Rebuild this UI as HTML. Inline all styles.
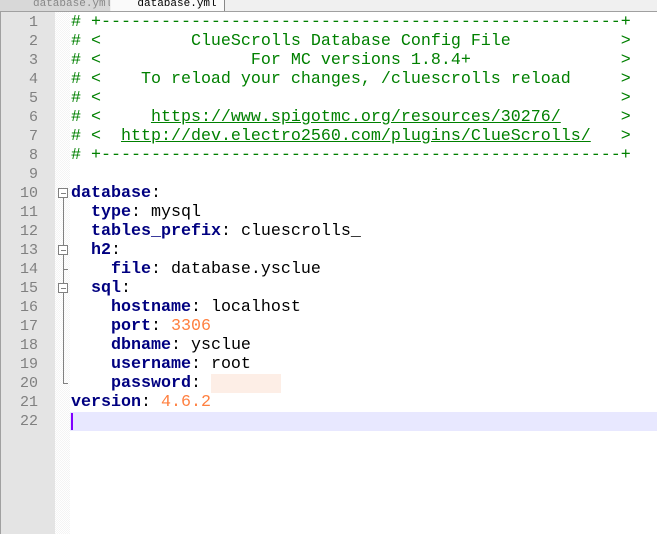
<!DOCTYPE html><html><head><style>
body{margin:0;width:657px;height:534px;overflow:hidden;background:#fff;position:relative;font-family:"Liberation Mono",monospace}
.tabs{position:absolute;left:0;top:0;width:657px;height:11px;background:#f0f0f0;border-bottom:1px solid #a0a0a0}
.t1{position:absolute;left:0;top:0;width:110px;height:11px;background:#d8d8d8;font-size:11px;line-height:8px;color:#888;overflow:hidden}
.t2{position:absolute;left:111px;top:0;width:113px;height:11px;background:#fafafa;border-right:1px solid #888;font-size:11px;line-height:8px;color:#000;overflow:hidden}
.gut{position:absolute;left:0;top:12px;width:55px;height:522px;background:#e4e4e4;border-left:1px solid #a0a0a0}
.fold{position:absolute;left:55px;top:12px;width:15px;height:522px;background:repeating-conic-gradient(#f4f4f4 0 25%,#fff 0 50%) 0 0/2px 2px}
.cur{position:absolute;left:70px;top:412px;width:587px;height:19px;background:#e8e8ff}
.caret{position:absolute;left:71px;top:413px;width:2px;height:17px;background:#8000ff}
pre{margin:0;position:absolute;top:13px;font-size:16.67px;line-height:19px;font-family:"Liberation Mono",monospace}
.nums{left:0;width:38px;text-align:right;color:#808080;font-size:15px}
.code{left:71px;color:#000}
.c{color:#008000}.u{color:#008000;text-decoration:underline}
.k{color:#000080;font-weight:bold}.n{color:#ff8040}
.fb{position:absolute;left:58px;width:8px;height:8px;border:1px solid #808080;background:#fff}
.fb::after{content:"";position:absolute;left:2px;top:4px;width:5px;height:1px;background:#808080}
.vl{position:absolute;left:63px;width:1px;background:#808080}
</style></head><body>
<div class="tabs"><div class="t1">&nbsp;&nbsp;&nbsp;&nbsp;&nbsp;database.yml</div><div class="t2">&nbsp;&nbsp;&nbsp;&nbsp;database.yml</div></div>
<div class="gut"></div><div class="fold"></div>
<div class="cur"></div><div class="caret"></div>
<div class="vl" style="top:198px;height:185px"></div>
<div class="vl" style="top:383px;width:5px;height:1px"></div>
<div class="vl" style="top:269px;width:5px;height:1px"></div>
<div class="fb" style="top:188px"></div><div class="fb" style="top:245px"></div><div class="fb" style="top:283px"></div>
<pre class="nums">1
2
3
4
5
6
7
8
9
10
11
12
13
14
15
16
17
18
19
20
21
22</pre>
<pre class="code"><span class="c"># +----------------------------------------------------+
# <         ClueScrolls Database Config File           >
# <               For MC versions 1.8.4+               >
# <    To reload your changes, /cluescrolls reload     >
# <                                                    >
# <     </span><span class="u">https://www.spigotmc.org/resources/30276/</span><span class="c">      >
# <  </span><span class="u">http://dev.electro2560.com/plugins/ClueScrolls/</span><span class="c">   >
# +----------------------------------------------------+</span>

<span class="k">database</span>:
  <span class="k">type</span>: mysql
  <span class="k">tables_prefix</span>: cluescrolls_
  <span class="k">h2</span>:
    <span class="k">file</span>: database.ysclue
  <span class="k">sql</span>:
    <span class="k">hostname</span>: localhost
    <span class="k">port</span>: <span class="n">3306</span>
    <span class="k">dbname</span>: ysclue
    <span class="k">username</span>: root
    <span class="k">password</span>: <span style="background:#fdeee6;color:transparent">1234567</span>
<span class="k">version</span>: <span class="n">4.6.2</span>
</pre>
</body></html>
